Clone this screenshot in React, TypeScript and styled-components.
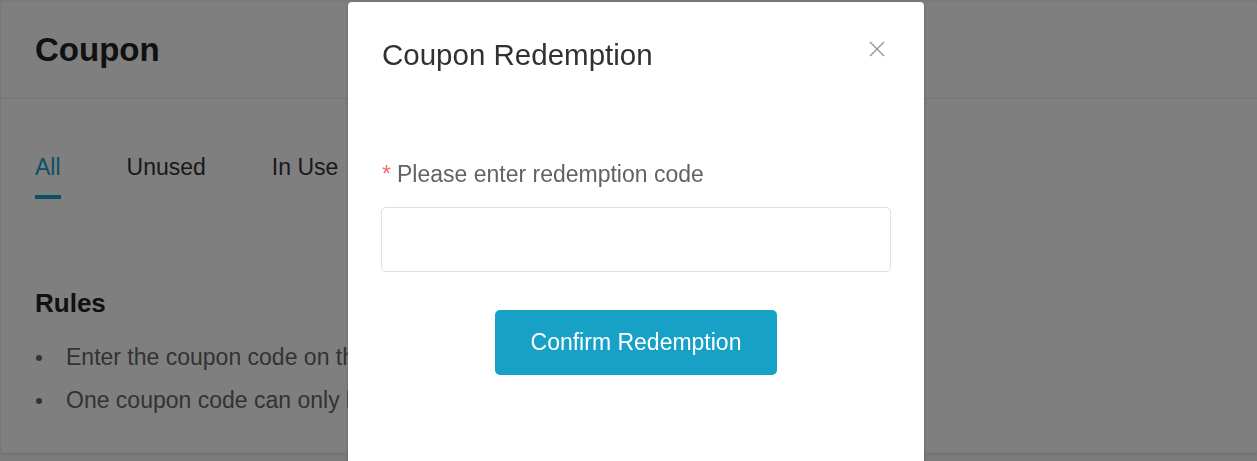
import { createGlobalStyle } from "styled-components"
import styled from "styled-components"

const GlobalStyle = createGlobalStyle`
  html, body {
    margin: 0;
    padding: 0;
    background: #f5f5f5;
    font-family: "Liberation Sans", Arial, sans-serif;
    overflow: hidden;
  }
  * { box-sizing: border-box; }
`

const PRIMARY = "#17a1c6"

const tabs = ["All", "Unused", "In Use", "Used", "Expired"]
const rules = [
  "Enter the coupon code on this page and click confirm to redeem it to your account.",
  "One coupon code can only be redeemed once.",
]

export default () => {
  return (
    <>
      <GlobalStyle />
      <SPage>
        <SCard>
          <SCardHeader>
            <STitle>Coupon</STitle>
          </SCardHeader>
          <STabs>
            {tabs.map((t, i) => (
              <STab key={t} $active={i === 0}>{t}</STab>
            ))}
          </STabs>
          <SRules>
            <SRulesTitle>Rules</SRulesTitle>
            <SRuleList>
              {rules.map(r => <SRule key={r}>{r}</SRule>)}
            </SRuleList>
          </SRules>
        </SCard>
      </SPage>

      <SOverlay />
      <SModal>
        <SModalHeader>
          <SModalTitle>Coupon Redemption</SModalTitle>
          <SClose aria-label="close">
            <svg width="16" height="16" viewBox="0 0 16 16">
              <path d="M1 1L15 15M15 1L1 15" stroke="#909399" strokeWidth="1.4" fill="none" />
            </svg>
          </SClose>
        </SModalHeader>
        <SModalBody>
          <SLabel><SStar>*</SStar>Please enter redemption code</SLabel>
          <SInput />
          <SActions>
            <SConfirm>Confirm Redemption</SConfirm>
          </SActions>
        </SModalBody>
      </SModal>
    </>
  )
}

const SPage = styled.div`
  padding: 2px 0 0 1px;
  height: 461px;
`

const SCard = styled.div`
  background: #fff;
  height: 451px;
  border-radius: 4px;
  box-shadow: 0 1px 3px rgba(0, 0, 0, 0.1);
`

const SCardHeader = styled.div`
  height: 97px;
  display: flex;
  align-items: center;
  padding-left: 34px;
  border-bottom: 1px solid #ebebeb;
`

const STitle = styled.h1`
  margin: 0;
  font-size: 33px;
  font-weight: 700;
  color: #222;
`

const STabs = styled.div`
  display: flex;
  gap: 66px;
  padding: 52px 0 0 34px;
`

const STab = styled.div<{ $active?: boolean }>`
  font-size: 23px;
  line-height: 32px;
  padding-bottom: 12px;
  color: ${p => (p.$active ? PRIMARY : "#333")};
  border-bottom: 4px solid ${p => (p.$active ? PRIMARY : "transparent")};
`

const SRules = styled.div`
  padding: 87px 0 0 34px;
`

const SRulesTitle = styled.h2`
  margin: 0;
  font-size: 26px;
  line-height: 34px;
  font-weight: 700;
  color: #222;
`

const SRuleList = styled.ul`
  margin: 16px 0 0;
  padding: 0;
  list-style: none;
  font-size: 23px;
  line-height: 43px;
  color: #666;
  white-space: nowrap;
`

const SRule = styled.li`
  display: flex;
  align-items: center;

  &::before {
    content: "";
    width: 6px;
    height: 6px;
    border-radius: 50%;
    background: #666;
    margin: 0 24px 0 1px;
    flex-shrink: 0;
  }
`

const SOverlay = styled.div`
  position: fixed;
  inset: 0;
  background: rgba(0, 0, 0, 0.5);
`

const SModal = styled.div`
  position: fixed;
  top: 2px;
  left: 348px;
  width: 576px;
  height: 480px;
  background: #fff;
  border-radius: 4px;
  box-shadow: 0 1px 3px rgba(0, 0, 0, 0.3);
`

const SModalHeader = styled.div`
  position: relative;
  padding: 34px 34px 0;
`

const SModalTitle = styled.div`
  font-size: 29.5px;
  line-height: 38px;
  color: #303133;
`

const SClose = styled.button`
  position: absolute;
  top: 39px;
  right: 39px;
  padding: 0;
  border: 0;
  background: none;
  width: 16px;
  height: 16px;
  cursor: pointer;
  display: flex;
`

const SModalBody = styled.div`
  padding: 84px 33px 0;
`

const SLabel = styled.div`
  font-size: 23px;
  line-height: 32px;
  color: #606266;
  padding-left: 1px;
`

const SStar = styled.span`
  color: #f56c6c;
  margin-right: 6px;
`

const SInput = styled.input`
  display: block;
  margin-top: 17px;
  width: 100%;
  height: 65px;
  border: 1px solid #dcdfe6;
  border-radius: 5px;
  outline: none;
  font-size: 23px;
  padding: 0 16px;
  font-family: inherit;
`

const SActions = styled.div`
  display: flex;
  justify-content: center;
  margin-top: 38px;
`

const SConfirm = styled.button`
  width: 282px;
  height: 65px;
  border: 0;
  border-radius: 5px;
  background: ${PRIMARY};
  color: #fff;
  font-size: 23px;
  font-family: inherit;
  cursor: pointer;
`
